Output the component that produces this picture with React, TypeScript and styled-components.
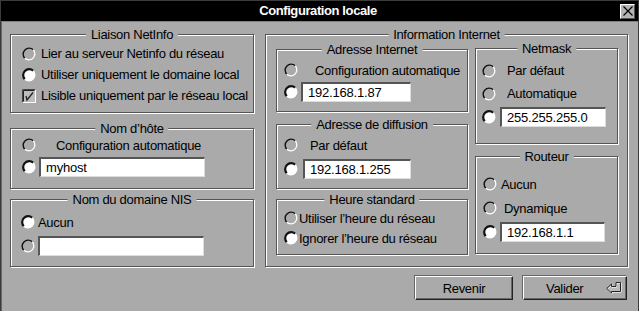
import React from 'react';
import styled, { createGlobalStyle } from 'styled-components';

const GlobalStyle = createGlobalStyle`
  html, body {
    margin: 0;
    padding: 0;
    background: #aaaaaa;
  }
  body {
    font-family: 'Liberation Sans', Arial, sans-serif;
    font-size: 13px;
    letter-spacing: -0.3px;
    color: #000;
  }
`;

const Radio = ({ on }: { on?: boolean }) => (
  <RadioSvg width="14" height="14" viewBox="0 0 14 14">
    <circle cx="7" cy="7" r="6" fill={on ? '#fff' : '#aaaaaa'} />
    <path d="M2.76 11.24 A6 6 0 0 1 11.24 2.76" fill="none" stroke="#111" strokeWidth={on ? 2.2 : 1.4} />
    <path d="M11.24 2.76 A6 6 0 0 1 2.76 11.24" fill="none" stroke="#fff" strokeWidth="1.3" />
  </RadioSvg>
);

const Check = () => (
  <RadioSvg width="14" height="14" viewBox="0 0 14 14">
    <rect x="0.5" y="0.5" width="13" height="13" fill="#bdbdbd" stroke="#fff" />
    <path d="M0.5 13.5 V0.5 H13.5" fill="none" stroke="#444" />
    <path d="M1.5 12.5 V1.5 H12.5" fill="none" stroke="#222" />
    <path d="M4 7 L5 11 L11 3.5" fill="none" stroke="#222" strokeWidth="1.3" />
  </RadioSvg>
);

const ReturnIcon = () => (
  <svg width="16" height="12" viewBox="0 0 16 12">
    <path d="M0.8 6.5 L5.5 2 V4.5 H10 V0.5 H14.5 V9.5 H5.5 V11 Z" fill="#bbb" stroke="#fff" transform="translate(0.6 0.6)" />
    <path d="M0.8 6.5 L5.5 2 V4.5 H10 V0.5 H14.5 V9.5 H5.5 V11 Z" fill="none" stroke="#222" />
  </svg>
);

type GroupProps = {
  title: string;
  w: number;
  h: number;
  mt?: number;
  pt: number;
  pl: number;
  children?: React.ReactNode;
};

const Group = ({ title, w, h, mt = 0, pt, pl, children }: GroupProps) => (
  <GroupBox $w={w} $h={h} $mt={mt} $pt={pt} $pl={pl}>
    <Legend>{title}</Legend>
    {children}
  </GroupBox>
);

export default function App() {
  return (
    <>
      <GlobalStyle />
      <Window>
        <TitleBar>
          <span />
          <Title>Configuration locale</Title>
          <CloseBox>
            <svg width="12" height="12" viewBox="0 0 12 12">
              <path d="M1.5 1.5 L10.5 10.5 M10.5 1.5 L1.5 10.5" stroke="#000" strokeWidth="1.2" />
            </svg>
          </CloseBox>
        </TitleBar>

        <Body>
          <Columns>
            <LeftColumn>
              <Group title="Liaison NetInfo" w={244} h={79} pt={8} pl={11}>
                <Row $h={21}>
                  <Radio />
                  <Label>Lier au serveur Netinfo du réseau</Label>
                </Row>
                <Row $h={21}>
                  <Radio on />
                  <Label>Utiliser uniquement le domaine local</Label>
                </Row>
                <Row $h={21}>
                  <Check />
                  <Label>Lisible uniquement par le réseau local</Label>
                </Row>
              </Group>

              <Group title="Nom d’hôte" w={244} h={61} mt={15} pt={5} pl={11}>
                <Row $h={22}>
                  <Radio />
                  <Label $indent={15}>Configuration automatique</Label>
                </Row>
                <Row $h={22}>
                  <Radio on />
                  <Field $w={166} $ml={3} defaultValue="myhost" />
                </Row>
              </Group>

              <Group title="Nom du domaine NIS" w={244} h={68} mt={10} pt={10} pl={10}>
                <Row $h={24}>
                  <Radio on />
                  <Label $indent={-2}>Aucun</Label>
                </Row>
                <Row $h={24}>
                  <Radio />
                  <Field $w={166} $ml={3} defaultValue="" />
                </Row>
              </Group>
            </LeftColumn>

            <InfoBox>
              <Legend>Information Internet</Legend>
              <InnerColumn $mt={14}>
                <Group title="Adresse Internet" w={192} h={63} pt={9} pl={7}>
                  <Row $h={22}>
                    <Radio />
                    <Label $indent={12}>Configuration automatique</Label>
                  </Row>
                  <Row $h={22}>
                    <Radio on />
                    <Field $w={110} $ml={3} defaultValue="192.168.1.87" />
                  </Row>
                </Group>
                <Group title="Adresse de diffusion" w={192} h={65} mt={12} pt={8} pl={7}>
                  <Row $h={24}>
                    <Radio />
                    <Label $indent={7}>Par défaut</Label>
                  </Row>
                  <Row $h={24}>
                    <Radio on />
                    <Field $w={108} $ml={5} defaultValue="192.168.1.255" />
                  </Row>
                </Group>
                <Group title="Heure standard" w={192} h={56} mt={10} pt={8} pl={7}>
                  <Row $h={20}>
                    <Radio />
                    <Label $indent={-4}>Utiliser l’heure du réseau</Label>
                  </Row>
                  <Row $h={20}>
                    <Radio on />
                    <Label $indent={-4}>Ignorer l’heure du réseau</Label>
                  </Row>
                </Group>
              </InnerColumn>

              <InnerColumn $mt={13}>
                <Group title="Netmask" w={143} h={96} pt={10} pl={6}>
                  <Row $h={23}>
                    <Radio />
                    <Label $indent={6}>Par défaut</Label>
                  </Row>
                  <Row $h={23}>
                    <Radio />
                    <Label $indent={6}>Automatique</Label>
                  </Row>
                  <Row $h={23}>
                    <Radio on />
                    <Field $w={106} $ml={4} defaultValue="255.255.255.0" />
                  </Row>
                </Group>
                <Group title="Routeur" w={143} h={98} mt={12} pt={15} pl={7}>
                  <Row $h={24}>
                    <Radio />
                    <Label $indent={-1}>Aucun</Label>
                  </Row>
                  <Row $h={24}>
                    <Radio />
                    <Label $indent={2}>Dynamique</Label>
                  </Row>
                  <Row $h={24}>
                    <Radio on />
                    <Field $w={105} $ml={3} defaultValue="192.168.1.1" />
                  </Row>
                </Group>
              </InnerColumn>
            </InfoBox>
          </Columns>

          <ButtonRow>
            <Button $w={98}>Revenir</Button>
            <Button $w={104} $primary>
              <span>Valider</span>
              <ReturnIcon />
            </Button>
          </ButtonRow>
        </Body>
      </Window>
    </>
  );
}

const Window = styled.div`
  box-sizing: border-box;
  width: 639px;
  height: 311px;
  background: #aaaaaa;
  border: 1px solid #3c3c3c;
  border-bottom: none;
  display: flex;
  flex-direction: column;
`;

const TitleBar = styled.div`
  box-sizing: border-box;
  height: 21px;
  background: #000;
  border-bottom: 1px solid #808080;
  display: grid;
  grid-template-columns: 1fr auto 1fr;
  align-items: center;
  padding: 0 3px 0 0;
`;

const Title = styled.div`
  color: #fff;
  font-weight: bold;
  font-size: 13px;
  letter-spacing: -0.4px;
  line-height: 20px;
`;

const CloseBox = styled.div`
  justify-self: end;
  box-sizing: border-box;
  width: 15px;
  height: 15px;
  background: #b4b4b4;
  border-top: 1px solid #fff;
  border-left: 1px solid #fff;
  border-right: 1px solid #555;
  border-bottom: 1px solid #555;
  display: flex;
  align-items: center;
  justify-content: center;
`;

const Body = styled.div`
  flex: 1;
  display: flex;
  flex-direction: column;
  padding: 12px 10px 0 9px;
  box-shadow: inset 1px 0 0 #666;
`;

const Columns = styled.div`
  display: flex;
  gap: 11px;
`;

const LeftColumn = styled.div`
  display: flex;
  flex-direction: column;
`;

const GroupBox = styled.div<{ $w: number; $h: number; $mt: number; $pt: number; $pl: number }>`
  position: relative;
  box-sizing: border-box;
  width: ${(p) => p.$w}px;
  height: ${(p) => p.$h}px;
  margin-top: ${(p) => p.$mt}px;
  padding: ${(p) => p.$pt}px 0 0 ${(p) => p.$pl}px;
  border: 1px solid #555;
  box-shadow: inset 1px 1px 0 #fff, 1px 1px 0 #fff;
  display: flex;
  flex-direction: column;
`;

const InfoBox = styled.div`
  position: relative;
  box-sizing: border-box;
  width: 363px;
  height: 233px;
  padding: 0 10px 0 10px;
  border: 1px solid #555;
  box-shadow: inset 1px 1px 0 #fff, 1px 1px 0 #fff;
  display: flex;
  gap: 7px;
`;

const InnerColumn = styled.div<{ $mt: number }>`
  display: flex;
  flex-direction: column;
  margin-top: ${(p) => p.$mt}px;
`;

const Legend = styled.span`
  position: absolute;
  top: -8px;
  left: 50%;
  transform: translateX(-50%);
  padding: 0 5px;
  background: #aaaaaa;
  font-size: 13px;
  line-height: 15px;
  white-space: nowrap;
`;

const Row = styled.div<{ $h: number }>`
  display: flex;
  align-items: center;
  height: ${(p) => p.$h}px;
`;

const RadioSvg = styled.svg`
  flex: none;
  display: block;
`;

const Label = styled.span<{ $indent?: number }>`
  margin-left: ${(p) => 5 + (p.$indent ?? 0)}px;
  white-space: nowrap;
  font-size: 13px;
`;

const Field = styled.input<{ $w: number; $ml?: number }>`
  box-sizing: border-box;
  width: ${(p) => p.$w}px;
  height: 20px;
  margin: 0 0 0 ${(p) => p.$ml ?? 4}px;
  padding: 0 0 0 5px;
  background: #fff;
  border-top: 2px solid #555;
  border-left: 2px solid #555;
  border-right: 1px solid #ddd;
  border-bottom: 1px solid #ddd;
  outline: none;
  font-family: 'Liberation Sans', Arial, sans-serif;
  font-size: 13px;
  letter-spacing: -0.2px;
  color: #000;
`;

const ButtonRow = styled.div`
  display: flex;
  justify-content: flex-end;
  gap: 10px;
  margin-top: 9px;
  padding-right: 1px;
`;

const Button = styled.div<{ $w: number; $primary?: boolean }>`
  box-sizing: border-box;
  width: ${(p) => p.$w}px;
  height: 24px;
  display: flex;
  align-items: center;
  justify-content: ${(p) => (p.$primary ? 'space-between' : 'center')};
  padding: ${(p) => (p.$primary ? '0 4px 0 22px' : '0')};
  background: #aaaaaa;
  border-top: 1px solid #fff;
  border-left: 1px solid #fff;
  border-right: 1px solid #222;
  border-bottom: 1px solid #222;
  box-shadow: inset -1px -1px 0 #666, -1px -1px 0 #666;
  font-size: 13px;
`;
